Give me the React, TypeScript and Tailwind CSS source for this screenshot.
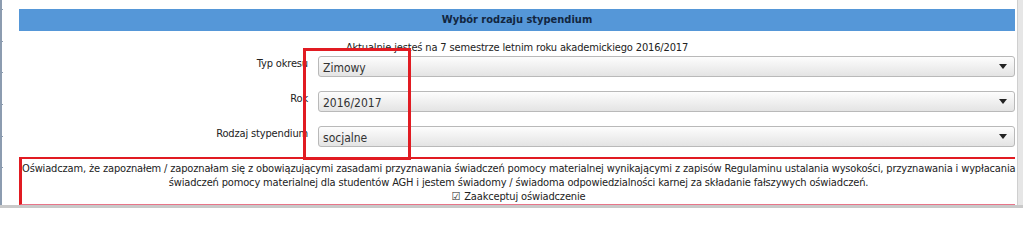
import React from "react";

const font = "font-['DejaVu_Sans_Condensed','DejaVu_Sans',sans-serif]";

function Select({ value }: { value: string }) {
  return (
    <div className="flex-1 min-w-0 h-[21px] flex items-center justify-between rounded-[3px] border border-[#b9b9b9] bg-gradient-to-b from-[#fdfdfd] to-[#e4e4e4] pl-[4px] pr-[7px] text-[12px] text-[#333]">
      <span className="leading-none pt-[3px]">{value}</span>
      <svg width="8" height="5" viewBox="0 0 8 5">
        <path d="M0 0 L8 0 L4 5 Z" fill="#222" />
      </svg>
    </div>
  );
}

function Row({ label, value }: { label: string; value: string }) {
  return (
    <div className="flex items-start">
      <div className="w-[289px] text-right text-[11px] tracking-[-0.15px] leading-[14px] text-[#222] pt-[1px]">{label}</div>
      <div className="w-[10px]" />
      <Select value={value} />
    </div>
  );
}

export default function App() {
  return (
    <div className={`w-[1023px] h-[208px] overflow-hidden bg-white flex flex-col relative ${font}`}>
      <div className="flex flex-1 min-h-0">
        <div className="w-[3px] flex flex-col bg-white border-l-2 border-[#8c9cb0]">
          {[10, 32, 31, 32, 32, 31].map((h, i) => (
            <div key={i} className="border-b border-[#8c9cb0]" style={{ height: h }} />
          ))}
        </div>
        <div className="flex-1 min-w-0 pl-[16px] pr-[2px] pt-[9px] flex flex-col">
          <div className="h-[24px] bg-[#5597d8] flex items-center justify-center text-[11px] font-bold text-[#12263f]">
            Wybór rodzaju stypendium
          </div>
          <div className="mt-[10px] text-center text-[11px] tracking-[-0.15px] leading-[14px] text-[#222]">
            Aktualnie jesteś na 7 semestrze letnim roku akademickiego 2016/2017
          </div>
          <div className="mt-[1px] flex flex-col gap-[14px]">
            <Row label="Typ okresu" value="Zimowy" />
            <Row label="Rok" value="2016/2017" />
            <Row label="Rodzaj stypendium" value="socjalne" />
          </div>
          <div className="mt-[10px] flex-1 min-w-0 border-l-[3px] border-t-2 border-b border-l-[#e11b22] border-t-[#e11b22] border-b-[#e8758a] pt-[3px] text-center text-[11px] tracking-[-0.15px] leading-[14px] text-[#222]">
            <div className="whitespace-nowrap">
              Oświadczam, że zapoznałem / zapoznałam się z obowiązującymi zasadami przyznawania świadczeń pomocy materialnej wynikającymi z zapisów Regulaminu ustalania wysokości, przyznawania i wypłacania
            </div>
            <div>
              świadczeń pomocy materialnej dla studentów AGH i jestem świadomy / świadoma odpowiedzialności karnej za składanie fałszywych oświadczeń.
            </div>
            <div className="flex items-center justify-center gap-[4px]">
              <span className="text-[11px]">☑</span>
              <span>Zaakceptuj oświadczenie</span>
            </div>
          </div>
        </div>
        <div className="w-[6px] bg-[#e6e6e6] border-l border-[#cfcfcf]" />
      </div>
      <div className="h-[3px] bg-[#c9c9c9]" />
      <div className="absolute left-[303px] top-[48px] w-[108px] h-[112px] border-[3px] border-[#e11b22]" />
    </div>
  );
}
